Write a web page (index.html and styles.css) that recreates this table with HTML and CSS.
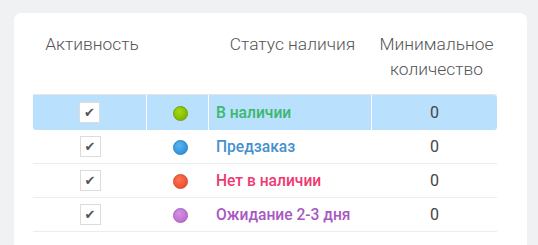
FILE: index.html
```html
<!DOCTYPE html>
<html lang="ru">
<head>
<meta charset="utf-8">
<link rel="stylesheet" href="styles.css">
</head>
<body>
<div class="card">
  <table class="stock">
    <colgroup>
      <col class="c1"><col class="c2"><col class="c3"><col class="c4">
    </colgroup>
    <thead>
      <tr>
        <th>Активность</th>
        <th></th>
        <th>Статус наличия</th>
        <th>Минимальное<br>количество</th>
      </tr>
    </thead>
    <tbody>
      <tr class="active">
        <td class="chk"><span class="box">✔</span></td>
        <td class="dotc"><span class="dot green"></span></td>
        <td class="status s-green">В наличии</td>
        <td class="num">0</td>
      </tr>
      <tr>
        <td class="chk"><span class="box">✔</span></td>
        <td class="dotc"><span class="dot blue"></span></td>
        <td class="status s-blue">Предзаказ</td>
        <td class="num">0</td>
      </tr>
      <tr>
        <td class="chk"><span class="box">✔</span></td>
        <td class="dotc"><span class="dot red"></span></td>
        <td class="status s-red">Нет в наличии</td>
        <td class="num">0</td>
      </tr>
      <tr>
        <td class="chk"><span class="box">✔</span></td>
        <td class="dotc"><span class="dot purple"></span></td>
        <td class="status s-purple">Ожидание 2-3 дня</td>
        <td class="num">0</td>
      </tr>
    </tbody>
  </table>
</div>
</body>
</html>
```
FILE: styles.css
```css
* { box-sizing: border-box; }
html, body { margin: 0; padding: 0; }
body {
  background: #f0f1f3;
  font-family: Roboto, "Liberation Sans", sans-serif;
  width: 538px;
  height: 245px;
  overflow: hidden;
}
.card {
  margin: 13px 11px 0 14px;
  height: 232px;
  background: #fff;
  border-radius: 7px 7px 0 0;
  padding: 19px 30px 0 19px;
}
.stock {
  width: 464px;
  border-collapse: separate;
  border-spacing: 0;
  table-layout: fixed;
}
.c1 { width: 114px; }
.c2 { width: 62px; }
.c3 { width: 163px; }
.c4 { width: 125px; }
.stock th {
  font-weight: 300;
  font-size: 17.4px;
  line-height: 25px;
  color: #555;
  text-align: center;
  vertical-align: top;
  padding: 0 0 12px 4px;
  border-bottom: 1px solid #e6e6e6;
}
.stock td {
  height: 34px;
  padding: 0;
  vertical-align: middle;
  border-bottom: 1px solid #ececec;
}
.stock tr.active td {
  background: #b9e0fc;
  border-bottom: none;
  border-right: 1px solid #fff;
  height: 35px;
}
.stock tr.active td:first-child { border-radius: 0 0 0 3px; }
.stock tr.active td:last-child { border-right: none; border-radius: 0 3px 3px 0; }
.chk { text-align: center; }
.box {
  display: inline-flex;
  width: 21px;
  height: 21px;
  align-items: center;
  justify-content: center;
  background: #fff;
  border: 1px solid #dcdcdc;
  color: #555;
  font-family: "DejaVu Sans", sans-serif;
  font-size: 13px;
  vertical-align: middle;
}
.dotc { text-align: center; padding-left: 5px !important; }
.dot {
  display: inline-block;
  width: 15px;
  height: 15px;
  border-radius: 50%;
  vertical-align: middle;
}
.green { background: radial-gradient(circle at 40% 35%, #a6d80e, #80bb00 70%); border: 1px solid #6f9f05; }
.blue { background: radial-gradient(circle at 40% 35%, #5cb4ee, #2f95de 70%); border: 1px solid #2a7fc0; }
.red { background: radial-gradient(circle at 40% 35%, #ff7356, #ee5230 70%); border: 1px solid #cf4a2e; }
.purple { background: radial-gradient(circle at 40% 35%, #d292e0, #c070d3 70%); border: 1px solid #a55cb8; }
.status {
  font-size: 15.6px;
  font-weight: 500;
  padding-left: 7px !important;
}
.s-green { color: #3ab870; }
.s-blue { color: #4591cd; }
.s-red { color: #ee3a70; }
.s-purple { color: #a958c2; }
.num {
  text-align: center;
  font-size: 16px;
  color: #444;
}
```
